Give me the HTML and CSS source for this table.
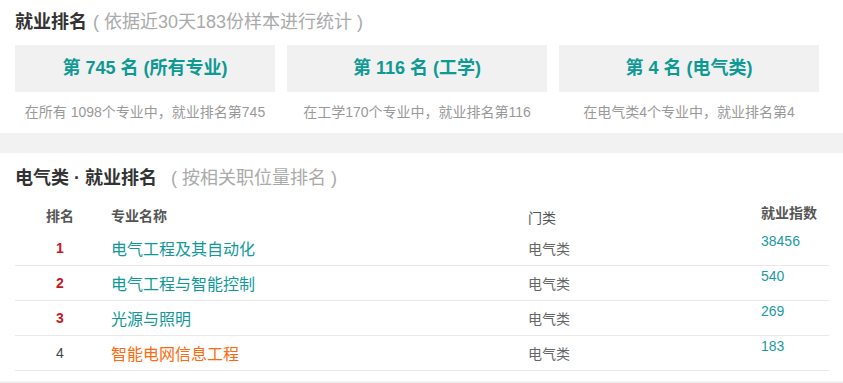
FILE: index.html
```html
<!DOCTYPE html>
<html lang="zh-CN">
<head>
<meta charset="utf-8">
<title>就业排名</title>
<link rel="stylesheet" href="styles.css">
</head>
<body>
<section class="rank-summary">
  <h2 class="sec-title">就业排名<span class="sec-sub">( 依据近30天183份样本进行统计 )</span></h2>
  <div class="cards">
    <div class="card">
      <div class="card-box">第 745 名 (所有专业)</div>
      <div class="card-cap">在所有 1098个专业中，就业排名第745</div>
    </div>
    <div class="card">
      <div class="card-box">第 116 名 (工学)</div>
      <div class="card-cap">在工学170个专业中，就业排名第116</div>
    </div>
    <div class="card">
      <div class="card-box">第 4 名 (电气类)</div>
      <div class="card-cap">在电气类4个专业中，就业排名第4</div>
    </div>
  </div>
</section>
<div class="band"></div>
<section class="rank-list">
  <h2 class="sec-title title2">电气类 · 就业排名<span class="sec-sub sub2">( 按相关职位量排名 )</span></h2>
  <table class="rank-table">
    <colgroup>
      <col class="c1"><col class="c2"><col class="c3"><col class="c4">
    </colgroup>
    <thead>
      <tr>
        <th class="th-rank">排名</th>
        <th class="th-name">专业名称</th>
        <th class="th-cat">门类</th>
        <th class="th-idx">就业指数</th>
      </tr>
    </thead>
    <tbody>
      <tr>
        <td class="rank top">1</td>
        <td class="name">电气工程及其自动化</td>
        <td class="cat">电气类</td>
        <td class="idx">38456</td>
      </tr>
      <tr>
        <td class="rank top">2</td>
        <td class="name">电气工程与智能控制</td>
        <td class="cat">电气类</td>
        <td class="idx">540</td>
      </tr>
      <tr>
        <td class="rank top">3</td>
        <td class="name">光源与照明</td>
        <td class="cat">电气类</td>
        <td class="idx">269</td>
      </tr>
      <tr>
        <td class="rank">4</td>
        <td class="name current">智能电网信息工程</td>
        <td class="cat">电气类</td>
        <td class="idx">183</td>
      </tr>
    </tbody>
  </table>
</section>
<div class="band bottom"></div>
</body>
</html>
```
FILE: styles.css
```css
* { box-sizing: border-box; }
html, body { margin: 0; padding: 0; background: #fff; }
body {
  font-family: "Liberation Sans", "Noto Sans CJK SC", sans-serif;
  color: #333;
  overflow: hidden;
}
.rank-summary { padding: 10px 15px 0; }
.sec-title {
  margin: 0;
  font-size: 18px;
  line-height: 24px;
  font-weight: bold;
  color: #333;
}
.sec-sub {
  font-weight: normal;
  color: #aaa;
  margin-left: 6px;
}
.cards {
  display: grid;
  grid-template-columns: repeat(3, 260px);
  column-gap: 12px;
  margin-top: 11px;
}
.card-box {
  height: 47px;
  line-height: 47px;
  background: #f1f1f1;
  text-align: center;
  font-size: 18px;
  font-weight: bold;
  color: #0e9a94;
}
.card-cap {
  margin-top: 10px;
  line-height: 20px;
  font-size: 14px;
  color: #999;
  text-align: center;
}
.band {
  height: 20px;
  background: #f2f2f2;
  margin-top: 11px;
}
.band.bottom { margin-top: 10px; height: 10px; }
.rank-list { padding: 13px 14px 0 15px; }
.sub2 { margin-left: 14px; }
.rank-table {
  width: 814px;
  margin-top: 6px;
  border-collapse: separate;
  border-spacing: 0;
  table-layout: fixed;
  font-size: 14px;
}
.c1 { width: 90px; }
.c2 { width: 417px; }
.c3 { width: 233px; }
.c4 { width: 74px; }
.rank-table th {
  height: 35px;
  padding: 0 0 0 6px;
  text-align: left;
  color: #555;
  font-weight: bold;
  vertical-align: middle;
}
.rank-table th.th-rank { text-align: center; padding: 3px 0 0; }
.rank-table th.th-name { padding-top: 3px; }
.rank-table th.th-cat { font-weight: normal; padding-top: 7px; }
.rank-table th.th-idx { padding-bottom: 3px; }
.rank-table td {
  height: 35px;
  padding: 0 0 0 6px;
  border-bottom: 1px solid #e8e8e8;
  vertical-align: middle;
}
.rank-table td.rank {
  text-align: center;
  padding: 0;
  color: #444;
  font-size: 14px;
}
.rank-table td.rank.top { color: #c9161f; font-weight: bold; }
.rank-table td.name { font-size: 16px; color: #11999a; }
.rank-table td.name.current { color: #ff6a10; }
.rank-table td.cat { color: #666; }
.rank-table td.idx {
  color: #1a9ba3;
  vertical-align: top;
  padding-top: 2px;
}
```
